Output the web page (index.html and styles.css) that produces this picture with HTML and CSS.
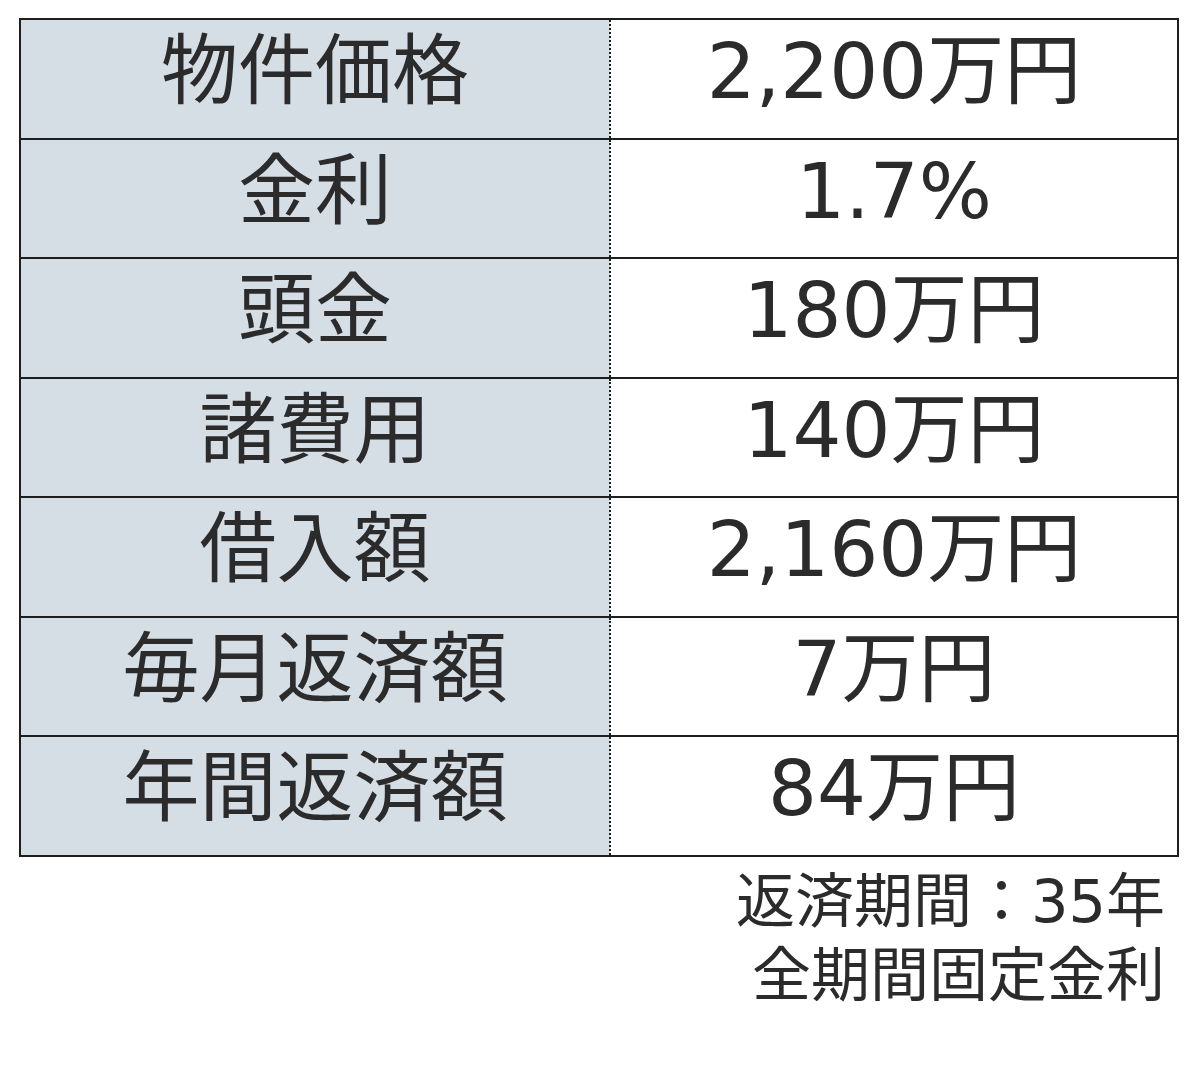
FILE: index.html
```html
<!DOCTYPE html>
<html lang="ja">
<head>
<meta charset="utf-8">
<link rel="stylesheet" href="styles.css">
</head>
<body>
<div class="wrap">
  <table class="loan">
    <tr><th>物件価格</th><td>2,200万円</td></tr>
    <tr><th>金利</th><td>1.7%</td></tr>
    <tr><th>頭金</th><td>180万円</td></tr>
    <tr><th>諸費用</th><td>140万円</td></tr>
    <tr><th>借入額</th><td>2,160万円</td></tr>
    <tr><th>毎月返済額</th><td>7万円</td></tr>
    <tr><th>年間返済額</th><td>84万円</td></tr>
  </table>
  <div class="note">
    <p>返済期間：35年</p>
    <p>全期間固定金利</p>
  </div>
</div>
</body>
</html>
```
FILE: styles.css
```css
html, body {
  margin: 0;
  padding: 0;
  background: #ffffff;
}
body {
  font-family: "DejaVu Sans", "Noto Sans CJK JP", sans-serif;
  color: #2b2b2b;
}
.wrap {
  padding: 18px 21px 0 19px;
}
.loan {
  width: 100%;
  border-collapse: collapse;
  border: 2px solid #1e1e1e;
}
.loan tr {
  height: 119.5px;
}
.loan th,
.loan td {
  font-weight: 400;
  font-size: 77px;
  line-height: 1;
  text-align: center;
  vertical-align: middle;
  padding: 0 0 14px 0;
  border-top: 2px solid #1e1e1e;
  border-bottom: 2px solid #1e1e1e;
}
.loan th {
  width: 588px;
  background: #d5dde5;
  border-right: 2px dotted #1e1e1e;
}
.loan td {
  background: #ffffff;
}
.note {
  text-align: right;
  padding-right: 14px;
  margin-top: 8px;
}
.note p {
  margin: 0;
  font-size: 59px;
  line-height: 74px;
}
```
